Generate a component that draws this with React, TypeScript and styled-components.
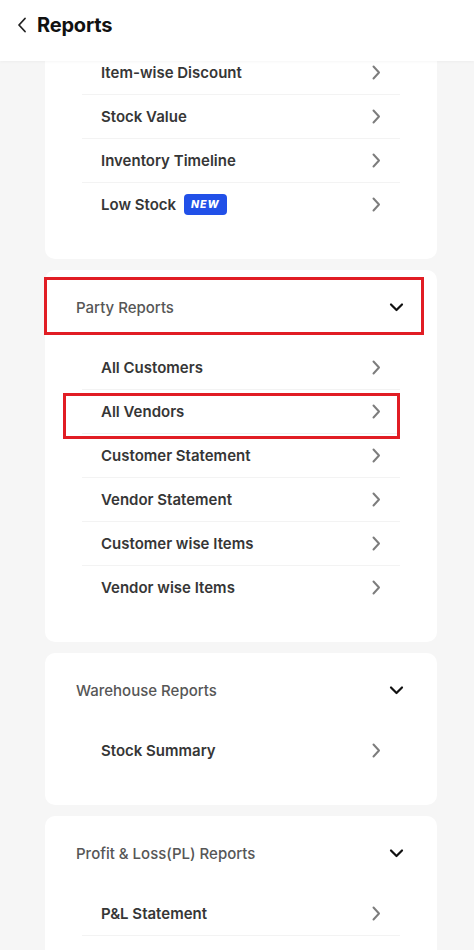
import React, { useLayoutEffect, useRef } from 'react'
import styled, { createGlobalStyle, css } from 'styled-components'

const GlobalStyle = createGlobalStyle`
    * { box-sizing: border-box; }
    html, body { margin: 0; padding: 0; height: 100%; }
    body {
        font-family: Inter, "Noto Sans", "Liberation Sans", sans-serif;
        background-color: #f6f6f6;
        -webkit-font-smoothing: antialiased;
    }
`

const Screen = styled.div`
    display: flex;
    flex-direction: column;
    height: 100vh;
    background-color: #f6f6f6;
`

const TopBar = styled.header`
    flex: 0 0 61px;
    display: flex;
    align-items: center;
    gap: 9px;
    padding: 0 0 12px 16px;
    background-color: #ffffff;
    box-shadow: 0 1px 3px rgba(0, 0, 0, 0.04);
    position: relative;
    z-index: 2;
`

const Title = styled.h1`
    margin: 0;
    font-size: 20px;
    font-weight: 700;
    color: #111111;
    letter-spacing: -0.2px;
`

const Scroller = styled.main`
    flex: 1;
    overflow-y: auto;
    scrollbar-width: none;
    &::-webkit-scrollbar { display: none; }
`

const List = styled.div`
    display: flex;
    flex-direction: column;
    gap: 11px;
    width: 392px;
    margin-left: 45px;
    padding-bottom: 40px;
`

const Card = styled.section`
    background-color: #ffffff;
    border-radius: 10px;
    padding: 20px 0 32px;
`

const redBox = css`
    &::after {
        content: '';
        position: absolute;
        border: 3px solid #e11d24;
        pointer-events: none;
    }
`

const SectionHead = styled.div<{ $marked?: boolean }>`
    position: relative;
    height: 34px;
    display: flex;
    align-items: center;
    justify-content: space-between;
    padding: 0 33px 0 31px;
    margin-bottom: 22px;
    font-size: 15px;
    font-weight: 500;
    color: #565656;
    ${p => p.$marked && css`
        ${redBox}
        &::after { top: -13px; bottom: -11px; left: -1px; right: 13px; }
    `}
`

const Row = styled.div<{ $marked?: boolean; $last?: boolean }>`
    position: relative;
    height: 44px;
    margin: 0 37px;
    padding: 0 19px;
    display: flex;
    align-items: center;
    border-bottom: 1px solid ${p => (p.$last ? 'transparent' : '#f3f3f3')};
    font-size: 15px;
    font-weight: 600;
    color: #363636;
    ${p => p.$marked && css`
        ${redBox}
        &::after { top: 3px; bottom: -6px; left: -19px; right: 0; }
    `}
`

const Label = styled.span`
    flex: 1;
    display: flex;
    align-items: center;
    gap: 8px;
`

const Badge = styled.span`
    display: inline-flex;
    align-items: center;
    height: 21px;
    padding: 0 7px;
    border-radius: 4px;
    background-color: #2150e8;
    color: #ffffff;
    font-size: 10.5px;
    font-weight: 800;
    font-style: italic;
    letter-spacing: 1px;
`

const BackIcon = () => (
    <svg width="12" height="16" viewBox="0 0 12 16" fill="none">
        <path d="M9 1.5L3 8l6 6.5" stroke="#222" strokeWidth="1.8" strokeLinecap="round" strokeLinejoin="round" />
    </svg>
)

const ChevronRight = () => (
    <svg width="10" height="15" viewBox="0 0 10 15" fill="none">
        <path d="M2.5 1.5L8 7.5l-5.5 6" stroke="#7d7d7d" strokeWidth="2" strokeLinecap="round" strokeLinejoin="round" />
    </svg>
)

const ChevronDown = () => (
    <svg width="15" height="10" viewBox="0 0 15 10" fill="none">
        <path d="M2 2.5l5.5 5.5L13 2.5" stroke="#111" strokeWidth="2.2" strokeLinecap="round" strokeLinejoin="round" />
    </svg>
)

type Item = { label: string; isNew?: boolean; marked?: boolean }
type Section = { title: string; marked?: boolean; items: Item[] }

const sections: Section[] = [
    {
        title: 'Item Reports',
        items: [
            { label: 'Item-wise Discount' },
            { label: 'Stock Value' },
            { label: 'Inventory Timeline' },
            { label: 'Low Stock', isNew: true },
        ],
    },
    {
        title: 'Party Reports',
        marked: true,
        items: [
            { label: 'All Customers' },
            { label: 'All Vendors', marked: true },
            { label: 'Customer Statement' },
            { label: 'Vendor Statement' },
            { label: 'Customer wise Items' },
            { label: 'Vendor wise Items' },
        ],
    },
    {
        title: 'Warehouse Reports',
        items: [{ label: 'Stock Summary' }],
    },
    {
        title: 'Profit & Loss(PL) Reports',
        items: [{ label: 'P&L Statement' }, { label: 'Balance Sheet' }, { label: 'Cash Flow' }],
    },
]

const App = () => {
    const scrollRef = useRef<HTMLElement>(null)

    // the list is opened part way down, with the first card's top tucked under the bar
    useLayoutEffect(() => {
        if (scrollRef.current) scrollRef.current.scrollTop = 86
    }, [])

    return (
        <Screen>
            <GlobalStyle />
            <TopBar>
                <BackIcon />
                <Title>Reports</Title>
            </TopBar>
            <Scroller ref={scrollRef}>
                <List>
                    {sections.map(section => (
                        <Card key={section.title}>
                            <SectionHead $marked={section.marked}>
                                {section.title}
                                <ChevronDown />
                            </SectionHead>
                            {section.items.map((item, i) => (
                                <Row
                                    key={item.label}
                                    $marked={item.marked}
                                    $last={i === section.items.length - 1}
                                >
                                    <Label>
                                        {item.label}
                                        {item.isNew && <Badge>NEW</Badge>}
                                    </Label>
                                    <ChevronRight />
                                </Row>
                            ))}
                        </Card>
                    ))}
                </List>
            </Scroller>
        </Screen>
    )
}

export default App
